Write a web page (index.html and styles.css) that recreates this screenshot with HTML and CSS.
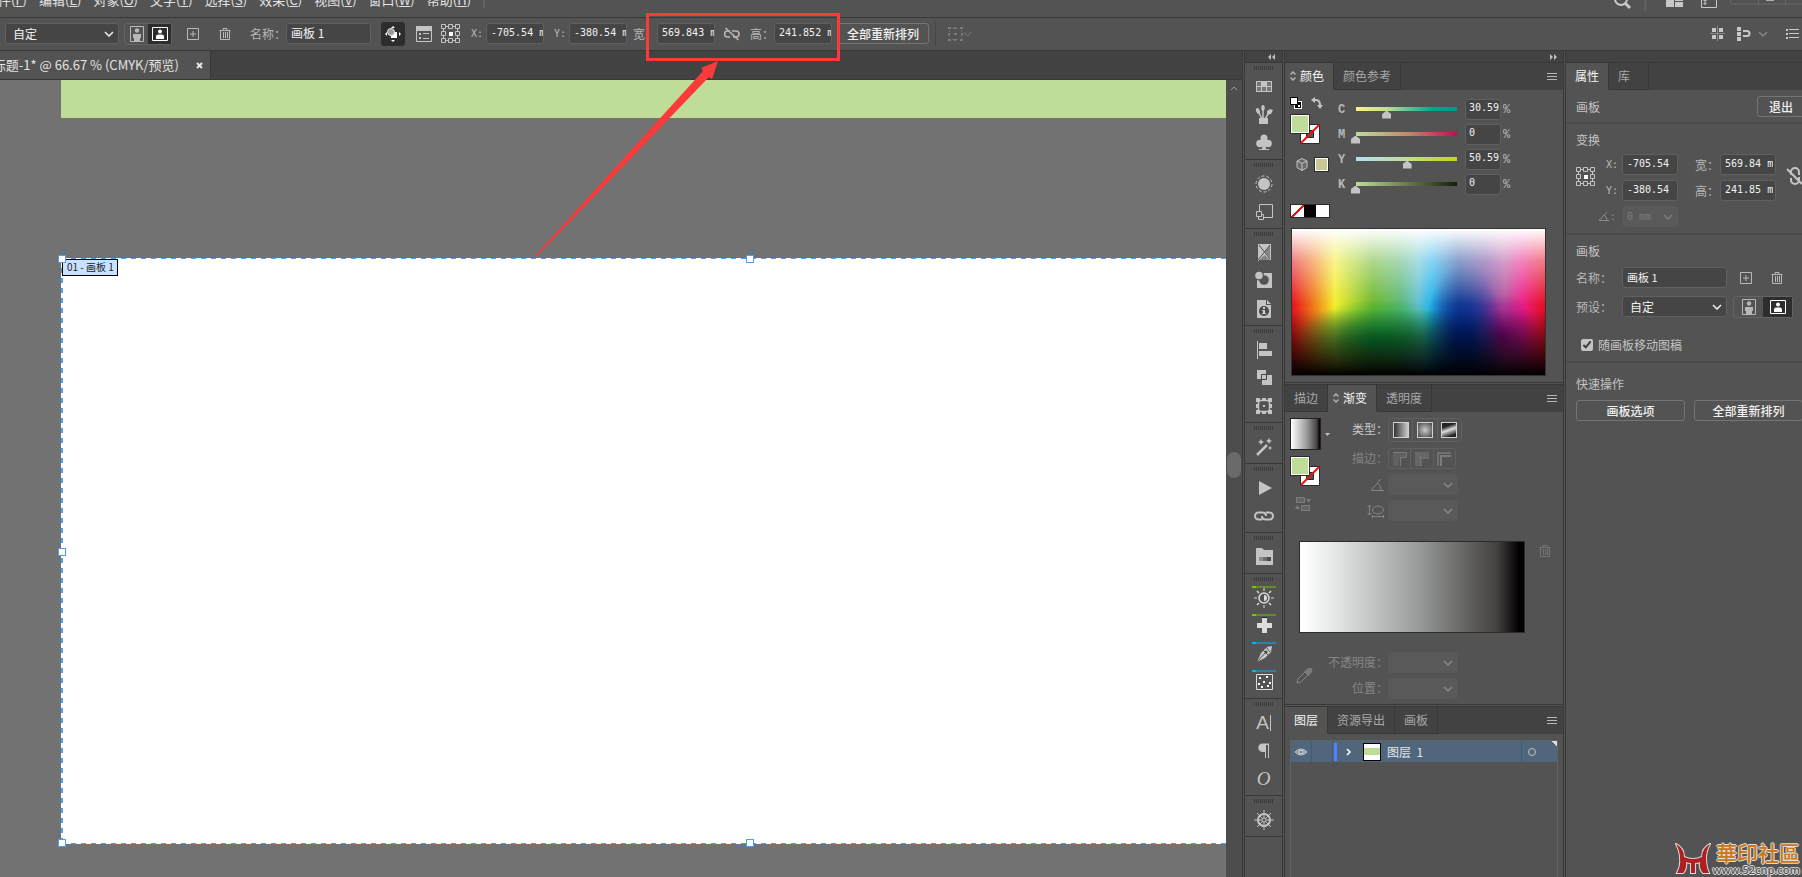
FILE: index.html
```html
<!DOCTYPE html>
<html lang="zh-CN">
<head>
    <meta charset="UTF-8">
    <meta name="viewport" content="width=device-width, initial-scale=1.0">
    <title>标题-1</title>
    <link rel="stylesheet" href="styles.css">
</head>
<body>
    <!-- shared icons -->
    <svg class="sprite" width="0" height="0">
        <symbol id="portrait" viewBox="0 0 14 16">
            <path d="M.5.5h13v15H.5z" fill="none" stroke="currentColor"/>
            <circle cx="7" cy="4.500" r="2.200" fill="currentColor"/>
            <path d="M3 8h8v4h-1v3H4v-3H3z" fill="currentColor"/>
        </symbol>
        <symbol id="landscape" viewBox="0 0 16 14">
            <path d="M.5.5h15v13H.5z" fill="none" stroke="currentColor"/>
            <circle cx="8" cy="4.500" r="2" fill="currentColor"/>
            <path d="M4 12V9l1.500-1.500h5L12 9v3z" fill="currentColor"/>
        </symbol>
        <symbol id="plus" viewBox="0 0 12 12">
            <path d="M.5.5h11v11H.5zM6 3v6M3 6h6" fill="none" stroke="currentColor"/>
        </symbol>
        <symbol id="trash" viewBox="0 0 12 12">
            <path d="M.5 2.500h11M4 2V.5h4V2M1.500 2.500v9h9v-9M4.500 4v6M6.500 4v6M8.500 4v6" fill="none" stroke="currentColor"/>
        </symbol>
        <symbol id="refpoint" viewBox="0 0 20 20">
            <path d="M.5.5h4v4h-4zM7.500.5h4v4h-4zM14.500.5h4v4h-4zM.5 7.500h4v4h-4zM14.500 7.500h4v4h-4zM.5 14.500h4v4h-4zM7.500 14.500h4v4h-4zM14.500 14.500h4v4h-4zM5 2.500h2M12 2.500h2M5 16.500h2M12 16.500h2M2.500 5v2M2.500 12v2M16.500 5v2M16.500 12v2" fill="none" stroke="#c4c4c4"/>
            <path d="M8 8h4v4H8z" fill="#fff"/>
        </symbol>
        <symbol id="unlink" viewBox="0 0 16 14">
            <path d="M6 4H3.500a3 3 0 0 0 0 6H6M8 4h4a3 3 0 0 1 0 6H9M1.500 1l13 12" fill="none" stroke="currentColor" stroke-width="1.600"/>
        </symbol>
        <symbol id="chevron" viewBox="0 0 10 6">
            <path d="M1 1l4 4 4-4" fill="none" stroke="currentColor" stroke-width="1.500"/>
        </symbol>
        <symbol id="menu" viewBox="0 0 10 8">
            <path d="M0 .5h10M0 3.500h10M0 6.500h10" stroke="#b8b8b8"/>
        </symbol>
        <symbol id="updown" viewBox="0 0 6 10">
            <path d="M.5 3.500L3 1l2.500 2.500M.5 6.500L3 9l2.500-2.500" fill="none" stroke="#b0b0b0" stroke-width="1.500"/>
        </symbol>
        <symbol id="fillstroke" viewBox="0 0 30 30">
            <path d="M10.500 10.500h19v19h-19z" fill="#fff" stroke="#2b2b2b"/>
            <path d="M16.500 16.500h7v7h-7z" fill="#535353" stroke="#2b2b2b"/>
            <path d="M11 29L29 11" stroke="#f01010" stroke-width="2"/>
            <path d="M.5.5h19v19H.5z" fill="#fff" stroke="#2b2b2b"/>
            <path d="M2 2h16v16H2z" fill="#bfdc98"/>
        </symbol>
    </svg>

    <nav class="menubar">
        <a href="#">文件(<u>F</u>)</a>
        <a href="#">编辑(<u>E</u>)</a>
        <a href="#">对象(<u>O</u>)</a>
        <a href="#">文字(<u>T</u>)</a>
        <a href="#">选择(<u>S</u>)</a>
        <a href="#">效果(<u>C</u>)</a>
        <a href="#">视图(<u>V</u>)</a>
        <a href="#">窗口(<u>W</u>)</a>
        <a href="#">帮助(<u>H</u>)</a>
        <span class="menu-sep"></span>
        <svg class="menu-tools" width="190" height="16" viewBox="0 0 190 16">
            <circle cx="9" cy="-1" r="6" fill="none" stroke="#c8c8c8" stroke-width="2"/>
            <path d="M13 3l5 5" stroke="#c8c8c8" stroke-width="3"/>
            <path d="M33.500 0v11" stroke="#636363" stroke-width="2"/>
            <path d="M54 0h8v7h-8zM63 0h8v1h-8zM63 2h8v5h-8z" fill="#c8c8c8"/>
            <path d="M89.500-5v12.500h15V-5M92 0h2v1h-2zM92 3h2v1h-2z" fill="none" stroke="#c8c8c8"/>
            <path d="M118.500-5v7q0 2 2 2H190M146.500 0v4M173.500 0v4" fill="none" stroke="#6a6a6a"/>
            <path d="M154 0h8" stroke="#b0b0b0" stroke-width="2"/>
        </svg>
    </nav>

    <form class="controlbar">
        <span class="select preset">
            <select aria-label="画板预设"><option>自定</option></select>
            <svg width="10" height="6"><use href="#chevron"/></svg>
        </span>
        <span class="toggle">
            <button type="button" aria-label="纵向"><svg width="14" height="16"><use href="#portrait"/></svg></button>
            <button type="button" class="on" aria-label="横向"><svg width="16" height="14"><use href="#landscape"/></svg></button>
        </span>
        <button type="button" class="icon-btn new" aria-label="新建画板"><svg width="12" height="12"><use href="#plus"/></svg></button>
        <button type="button" class="icon-btn del" aria-label="删除画板"><svg width="12" height="12"><use href="#trash"/></svg></button>
        <label for="bar-name">名称：</label>
        <input class="name" id="bar-name" type="text" value="画板 1">
        <button type="button" class="move-art on" aria-label="移动图稿">
            <svg width="18" height="18" viewBox="0 0 18 18">
                <path d="M9 1l2 2H7zM9 17l2-2H7zM1 9l2-2v4zM17 9l-2-2v4z" fill="#fff"/>
                <path d="M6 7h7v6H7z" fill="#fff"/>
                <circle cx="7" cy="7" r="3.500" fill="#9a9a9a" stroke="#e0e0e0"/>
            </svg>
        </button>
        <button type="button" class="icon-btn opts" aria-label="画板选项">
            <svg width="16" height="16" viewBox="0 0 16 16">
                <path d="M.5.5h15v15H.5z" fill="none" stroke="#c4c4c4"/>
                <path d="M0 0h16v5H0zM3 7h2v2H3zM3 11h2v2H3zM7 7h6v1H7zM7 12h6v1H7z" fill="#c4c4c4"/>
            </svg>
        </button>
        <svg class="ref" width="20" height="20"><use href="#refpoint"/></svg>
        <label class="mono lx" for="bar-x">X:</label>
        <input class="num" id="bar-x" type="text" value="-705.54 mm">
        <label class="mono ly" for="bar-y">Y:</label>
        <input class="num" id="bar-y" type="text" value="-380.54 mm">
        <label class="wh" for="bar-w">宽：</label>
        <input class="num" id="bar-w" type="text" value="569.843 mm">
        <button type="button" class="icon-btn link" aria-label="约束宽高比例"><svg width="16" height="14"><use href="#unlink"/></svg></button>
        <label class="wh" for="bar-h">高：</label>
        <input class="num" id="bar-h" type="text" value="241.852 mm">
        <button type="button" class="outline rearrange">全部重新排列</button>
        <span class="bar-sep"></span>
        <svg class="snap" width="24" height="16" viewBox="0 0 24 16">
            <path d="M4 2h2v1H4zM8 2h2v1H8zM4 13h2v1H4zM8 13h2v1H8zM1 4h1v2H1zM1 9h1v2H1zM13 4h1v2h-1zM13 9h1v2h-1z" fill="#707070"/>
            <path d="M0 1h3v2H0zM12 1h3v2h-3zM0 13h3v2H0zM12 13h3v2h-3zM6 7h3v2H6zM6 1h2v2H6zM6 13h2v2H6zM0 7h2v2H0zM13 7h2v2h-2z" fill="#7c7c7c"/>
            <path d="M16 6l3.500 4L23 6" fill="none" stroke="#7c7c7c"/>
        </svg>
        <svg class="bar-tools" width="92" height="16" viewBox="0 0 92 16">
            <path d="M0 7h15v1H0zM7 0h1v15H7z" fill="#8a8a8a"/>
            <path d="M2 2h4v4H2zM9 2h4v4H9zM2 9h4v4H2zM9 9h4v4H9z" fill="#c8c8c8"/>
            <path d="M27 1h4v4h-4zM27 6h4v4h-4zM27 11h4v4h-4z" fill="#c8c8c8"/>
            <path d="M33 5h4a2.500 2.500 0 0 1 0 5h-4" fill="none" stroke="#c8c8c8" stroke-width="2"/>
            <path d="M49 6l4 4 4-4" fill="none" stroke="#858585" stroke-width="1.500"/>
            <path d="M76 3h2v2h-2zM76 7h2v2h-2zM76 11h2v2h-2zM79 3h10v1H79zM79 7h10v1H79zM79 11h10v1H79z" fill="#c8c8c8"/>
        </svg>
    </form>

    <div class="workspace">
        <main class="document">
            <div class="doc-tabs">
                <div class="doc-tab">
                    <span>标题-1* @ 66.67 % (CMYK/预览)</span>
                    <button type="button" class="icon-btn" aria-label="关闭"><svg width="7" height="7" viewBox="0 0 7 7"><path d="M1 1l5 5M6 1L1 6" stroke="#e6e6e6" stroke-width="2"/></svg></button>
                </div>
            </div>
            <div class="view">
                <div class="canvas">
                    <div class="artboard previous"></div>
                    <div class="artboard current">
                        <span class="artboard-name">01 - 画板 1</span>
                        <i class="handle tl"></i><i class="handle tc"></i>
                        <i class="handle ml"></i>
                        <i class="handle bl"></i><i class="handle bc"></i>
                    </div>
                </div>
                <div class="scrollbar">
                    <svg width="8" height="5" viewBox="0 0 8 5"><path d="M1 4l3-3 3 3" fill="none" stroke="#9a9a9a"/></svg>
                    <span class="scroll-thumb"></span>
                </div>
            </div>
        </main>

        <aside class="strip">
            <div class="collapse"><svg width="8" height="6" viewBox="0 0 8 6"><path d="M3 0L0 3l3 3zM7 0L4 3l3 3z" fill="#c0c0c0"/></svg></div>
            <div class="strip-group">
                <span class="grip"></span>
                <button type="button" aria-label="色板"><svg width="20" height="20" viewBox="0 0 20 20"><path d="M2 4h16v11H2z" fill="#c4c4c4"/><path d="M3 5h4v4H3zM13 5h4v4h-4zM3 10h4v4H3zM8 10h4v4H8zM13 10h4v4h-4z" fill="#777"/></svg></button>
                <button type="button" aria-label="画笔"><svg width="20" height="20" viewBox="0 0 20 20"><path d="M5 13h9v6H5z" fill="#c4c4c4"/><ellipse cx="4" cy="6" rx="1.800" ry="3" fill="#c4c4c4" transform="rotate(-25 4 6)"/><ellipse cx="9" cy="3" rx="1.700" ry="3" fill="#c4c4c4"/><path d="M13 6l3-2 3 1-2 4-4 1z" fill="#c4c4c4"/><path d="M5 8l3 6M9 5v9M14 9l-3 5" stroke="#c4c4c4" stroke-width="1.500"/></svg></button>
                <button type="button" aria-label="符号"><svg width="20" height="20" viewBox="0 0 20 20"><circle cx="10" cy="5" r="3.500" fill="#c4c4c4"/><circle cx="6" cy="10.500" r="3.800" fill="#c4c4c4"/><circle cx="14" cy="10.500" r="3.800" fill="#c4c4c4"/><path d="M9 7h2l1 9h3v1H5v-1h3z" fill="#c4c4c4"/></svg></button>
            </div>
            <div class="strip-group">
                <span class="grip"></span>
                <button type="button" aria-label="外观"><svg width="20" height="20" viewBox="0 0 20 20"><circle cx="10" cy="10" r="6" fill="#c4c4c4"/><circle cx="10" cy="10" r="8" fill="none" stroke="#c4c4c4" stroke-dasharray="3 2"/></svg></button>
                <button type="button" aria-label="图形样式"><svg width="20" height="20" viewBox="0 0 20 20"><path d="M5.500 9V2.500h13v13H10M2.500 9.500h5v5h-5z" fill="none" stroke="#c4c4c4"/><path d="M4.500 14.500v3h5v-5h-2" fill="none" stroke="#c4c4c4"/></svg></button>
            </div>
            <div class="strip-group">
                <span class="grip"></span>
                <button type="button" aria-label="图案"><svg width="20" height="20" viewBox="0 0 20 20"><path d="M4 1h13v17H4z" fill="#c4c4c4"/><path d="M10.500 8.500L16 2v13z" fill="#858585"/><path d="M5 17l5.500-5 5.500 5z" fill="#858585"/><path d="M4 17l12-15M5 2l11 14M5 17.500h12" fill="none" stroke="#535353"/></svg></button>
                <button type="button" aria-label="路径"><svg width="20" height="20" viewBox="0 0 20 20"><path d="M3 2h15v15H3z" fill="#c4c4c4"/><circle cx="10" cy="9" r="4.800" fill="#535353"/><circle cx="5" cy="4.500" r="5" fill="#535353"/><circle cx="5" cy="4.500" r="3.800" fill="#c4c4c4"/></svg></button>
                <button type="button" aria-label="文档信息"><svg width="20" height="20" viewBox="0 0 20 20"><path d="M3 1h9v5h5v13H3zM13 1l4 4h-4z" fill="#c4c4c4"/><circle cx="10" cy="12" r="5" fill="#4b4b4b"/><path d="M9 8h2v2H9zM8 11h3v3h1v1H8v-1h1v-2H8z" fill="#d0d0d0"/></svg></button>
            </div>
            <div class="strip-group">
                <span class="grip"></span>
                <button type="button" aria-label="对齐"><svg width="20" height="20" viewBox="0 0 20 20"><path d="M3 1h1v18H3zM5 3h8v6H5zM5 11h13v5H5z" fill="#c4c4c4"/></svg></button>
                <button type="button" aria-label="路径查找器"><svg width="20" height="20" viewBox="0 0 20 20"><path d="M3 2h9v9H3zM8 7h10v10H8z" fill="#c4c4c4"/><path d="M7.500 6.500h5v5h-5z" fill="#c4c4c4" stroke="#454545"/></svg></button>
                <button type="button" aria-label="变换"><svg width="20" height="20" viewBox="0 0 20 20"><path d="M4.500 4.500h11v11h-11z" fill="none" stroke="#c4c4c4" stroke-width="1.500"/><path d="M2 2h4v4H2zM8 2h4v3H8zM14 2h4v4h-4zM2 14h4v4H2zM14 14h4v4h-4zM8 15h4v3H8zM9 9h2v2H9zM2 8h2v4H2zM16 8h2v4h-2z" fill="#c4c4c4"/></svg></button>
            </div>
            <div class="strip-group">
                <span class="grip"></span>
                <button type="button" aria-label="魔棒"><svg width="20" height="20" viewBox="0 0 20 20"><path d="M3 18L13 8" stroke="#c4c4c4" stroke-width="2.500"/><path d="M7 2l1 2 2 1-2 1-1 2-1-2-2-1 2-1zM15 1l1 2 2 1-2 1-1 2-1-2-2-1 2-1zM16 9l.7 1.300L18 11l-1.300.7L16 13l-.7-1.300L14 11l1.300-.7z" fill="#c4c4c4"/></svg></button>
            </div>
            <div class="strip-group">
                <span class="grip"></span>
                <button type="button" aria-label="动作"><svg width="20" height="20" viewBox="0 0 20 20"><path d="M5 3l13 7-13 7z" fill="#c4c4c4"/></svg></button>
                <button type="button" aria-label="链接"><svg width="20" height="20" viewBox="0 0 20 20"><path d="M8 13.500H4.500a3.500 3.500 0 0 1 0-7h4Q12 6.500 12 10M12 6.500h3.500a3.500 3.500 0 0 1 0 7h-4Q8 13.500 8 10" fill="none" stroke="#c4c4c4" stroke-width="2"/></svg></button>
            </div>
            <div class="strip-group">
                <span class="grip"></span>
                <button type="button" aria-label="库"><svg width="20" height="20" viewBox="0 0 20 20"><path d="M2 1h6l2 2h9v15H2z" fill="#c4c4c4"/><path d="M5 10h4v4H5z" fill="#8c8c8c"/><path d="M9 10h4v4H9z" fill="#6d6d6d"/><path d="M13 10h4v4h-4z" fill="#4b4b4b"/></svg></button>
            </div>
            <div class="strip-group plugins">
                <span class="grip"></span>
                <button type="button" class="green" aria-label="亮度"><svg width="20" height="20" viewBox="0 0 20 20"><circle cx="10" cy="10" r="5" fill="none" stroke="#dcdcdc" stroke-width="1.500"/><path d="M10 7a3 3 0 0 1 0 6zM9.500 0h1v3h-1zM9.500 17h1v3h-1zM0 9.500h3v1H0zM17 9.500h3v1h-3z" fill="#dcdcdc"/><path d="M3 3l2 2M17 3l-2 2M3 17l2-2M17 17l-2-2" stroke="#dcdcdc" stroke-width="1.500"/></svg></button>
                <button type="button" class="green" aria-label="添加"><svg width="20" height="20" viewBox="0 0 20 20"><path d="M8 2h5v5h5v5h-5v5H8v-5H3V7h5z" fill="#dcdcdc"/><path d="M8 1h5v1H8z" fill="#222"/></svg></button>
                <button type="button" class="blue" aria-label="钢笔"><svg width="20" height="20" viewBox="0 0 20 20"><path d="M3 18l4-9 6-6 5-1-1 6-6 6z" fill="#c8c8c8"/><path d="M3 18l8-9M12 3l4 5M9 6l5 5" stroke="#555"/><circle cx="12" cy="8" r="1.500" fill="#444"/></svg></button>
                <button type="button" class="blue" aria-label="随机"><svg width="20" height="20" viewBox="0 0 20 20"><path d="M2.500 2.500h16v15h-16z" fill="none" stroke="#dcdcdc"/><path d="M5 5h2v2H5zM12 4h2v2h-2zM9 9h2v2H9zM4 11h2v2H4zM15 10h2v2h-2zM7 14h2v2H7zM13 13h2v2h-2z" fill="#fff"/></svg></button>
            </div>
            <div class="strip-group">
                <span class="grip"></span>
                <button type="button" class="glyph char" aria-label="字符"><span>A</span></button>
                <button type="button" class="glyph" aria-label="段落"><svg width="20" height="20" viewBox="0 0 20 20"><path d="M8 2.500h7V17h-1V4h-2v13h-1v-6H9a4.200 4.200 0 0 1-1-8.500z" fill="#c4c4c4"/></svg></button>
                <button type="button" class="glyph opentype" aria-label="OpenType"><span>O</span></button>
            </div>
            <div class="strip-group">
                <span class="grip"></span>
                <button type="button" aria-label="导航"><svg width="20" height="20" viewBox="0 0 20 20"><circle cx="10" cy="10" r="6" fill="none" stroke="#c4c4c4" stroke-width="2"/><circle cx="10" cy="10" r="2" fill="none" stroke="#c4c4c4"/><path d="M10 0v8M10 12v8M0 10h8M12 10h8M3 3l5.500 5.500M17 3l-5.500 5.500M3 17l5.500-5.500M17 17l-5.500-5.500" stroke="#c4c4c4"/></svg></button>
            </div>
        </aside>

        <aside class="panels">
            <div class="collapse"><svg width="8" height="6" viewBox="0 0 8 6"><path d="M1 0l3 3-3 3zM5 0l3 3-3 3z" fill="#c0c0c0"/></svg></div>

            <section class="panel color-panel">
                <div class="tabs">
                    <button type="button" class="tab active with-arrow"><svg width="6" height="10"><use href="#updown"/></svg>颜色</button>
                    <button type="button" class="tab">颜色参考</button>
                    <svg class="panel-menu" width="10" height="8"><use href="#menu"/></svg>
                </div>
                <div class="color-body">
                    <div class="color-tools">
                        <div class="tool-row">
                            <svg width="12" height="12" viewBox="0 0 12 12"><path d="M4 4h8v8H4z" fill="#fff"/><path d="M5 5h6v6H5z" fill="#000"/><path d="M8 8h2v2H8z" fill="#fff"/><path d="M.5.5h7v7h-7z" fill="#fff" stroke="#000"/></svg>
                            <svg width="12" height="12" viewBox="0 0 12 12"><path d="M3 3h2q4 0 4 5" fill="none" stroke="#c4c4c4" stroke-width="2"/><path d="M0 3l4-3v6zM6 8h6l-3 4z" fill="#c4c4c4"/></svg>
                        </div>
                        <svg width="30" height="30"><use href="#fillstroke"/></svg>
                        <div class="tool-row gamut">
                            <svg width="12" height="13" viewBox="0 0 12 13"><path d="M6 .5l5 2.500v6.500l-5 3-5-3V3z" fill="#6a6a6a"/><path d="M6 .5l5 2.500v6.500l-5 3-5-3V3zM1 3l5 2.500L11 3M6 5.500v7" fill="none" stroke="#c4c4c4"/></svg>
                            <span class="gamut-swatch"></span>
                        </div>
                    </div>
                    <div class="sliders">
                        <div class="slider-row">
                            <label for="c">C</label>
                            <input class="range c" type="range" min="0" max="100" step="any" value="30.59" aria-label="C">
                            <input class="num" id="c" type="text" value="30.59"><span>%</span>
                        </div>
                        <div class="slider-row">
                            <label for="m">M</label>
                            <input class="range m" type="range" min="0" max="100" value="0" aria-label="M">
                            <input class="num" id="m" type="text" value="0"><span>%</span>
                        </div>
                        <div class="slider-row">
                            <label for="y">Y</label>
                            <input class="range y" type="range" min="0" max="100" step="any" value="50.59" aria-label="Y">
                            <input class="num" id="y" type="text" value="50.59"><span>%</span>
                        </div>
                        <div class="slider-row">
                            <label for="k">K</label>
                            <input class="range k" type="range" min="0" max="100" value="0" aria-label="K">
                            <input class="num" id="k" type="text" value="0"><span>%</span>
                        </div>
                    </div>
                </div>
                <div class="basic-swatches">
                    <span class="none"></span><span class="black"></span><span class="white"></span>
                </div>
                <div class="spectrum"></div>
            </section>

            <section class="panel gradient-panel">
                <div class="tabs">
                    <button type="button" class="tab">描边</button>
                    <button type="button" class="tab active with-arrow"><svg width="6" height="10"><use href="#updown"/></svg>渐变</button>
                    <button type="button" class="tab">透明度</button>
                    <svg class="panel-menu" width="10" height="8"><use href="#menu"/></svg>
                </div>
                <div class="gradient-body">
                    <div class="gradient-tools">
                        <div class="tool-row">
                            <span class="gradient-thumb"></span>
                            <svg width="5" height="3" viewBox="0 0 5 3"><path d="M0 0h5L2.500 3z" fill="#c4c4c4"/></svg>
                        </div>
                        <svg width="30" height="30"><use href="#fillstroke"/></svg>
                        <svg class="reverse" width="16" height="14" viewBox="0 0 16 14"><path d="M1.500.5h8v5h-8zM6.500 8.500h8v5h-8z" fill="#666" stroke="#7c7c7c"/><path d="M11 2h5l-2.500 4zM0 12h5L2.500 8z" fill="#7c7c7c"/></svg>
                    </div>
                    <div class="gradient-fields">
                        <div class="field-row type-row">
                            <span class="field-label bright">类型：</span>
                            <span class="segment types">
                                <button type="button" aria-label="线性"><i class="linear"></i></button>
                                <button type="button" aria-label="径向"><i class="radial"></i></button>
                                <button type="button" aria-label="任意形状"><i class="freeform"></i></button>
                            </span>
                        </div>
                        <div class="field-row">
                            <span class="field-label">描边：</span>
                            <span class="segment strokes">
                                <button type="button" aria-label="描边中应用渐变" disabled><svg width="14" height="14" viewBox="0 0 14 14"><path d="M0 0h14v6H6v8H0z" fill="#606060"/><path d="M0 .5h13.500v5h-6V14" fill="none" stroke="#7a7a7a"/></svg></button>
                                <button type="button" aria-label="沿描边应用渐变" disabled><svg width="14" height="14" viewBox="0 0 14 14"><path d="M0 0h14v6H6v8H0z" fill="#666"/><path d="M0 0l6 6h8M6 6v8" fill="none" stroke="#7a7a7a"/></svg></button>
                                <button type="button" aria-label="跨描边应用渐变" disabled><svg width="14" height="14" viewBox="0 0 14 14"><path d="M1 14V1h13" fill="none" stroke="#707070" stroke-width="2"/><path d="M4 14V4h10" fill="none" stroke="#7a7a7a" stroke-width="2"/></svg></button>
                            </span>
                        </div>
                        <div class="field-row">
                            <svg class="field-icon" width="14" height="12" viewBox="0 0 14 12"><path d="M11 0L1 11.500h13M7 4q4 2 4 7" fill="none" stroke="#858585"/></svg>
                            <span class="select dim"><select aria-label="角度" disabled><option></option></select><svg width="10" height="6"><use href="#chevron"/></svg></span>
                        </div>
                        <div class="field-row">
                            <svg class="field-icon" width="17" height="14" viewBox="0 0 17 14"><ellipse cx="11" cy="6" rx="5.500" ry="4" fill="none" stroke="#858585"/><path d="M2.500 1v10M.5 3l2-2 2 2M.5 9l2 2 2-2M5 12.500h12M5.500 11v3M16.500 11v3" fill="none" stroke="#858585"/></svg>
                            <span class="select dim"><select aria-label="长宽比" disabled><option></option></select><svg width="10" height="6"><use href="#chevron"/></svg></span>
                        </div>
                    </div>
                </div>
                <div class="ramp-row">
                    <span class="ramp"></span>
                    <svg class="faint" width="12" height="12"><use href="#trash"/></svg>
                </div>
                <div class="gradient-stop">
                    <svg width="18" height="18" viewBox="0 0 18 18"><path d="M2 16l1-4 7-7 3 3-7 7z" fill="none" stroke="#858585"/><path d="M9 4l5 5 1-2 2-2q1-3-1-4t-4 1l-1 1z" fill="#7c7c7c"/></svg>
                    <div class="gradient-fields">
                        <div class="field-row">
                            <label class="field-label" for="opacity">不透明度：</label>
                            <span class="select dim"><select id="opacity" disabled><option></option></select><svg width="10" height="6"><use href="#chevron"/></svg></span>
                        </div>
                        <div class="field-row">
                            <label class="field-label" for="location">位置：</label>
                            <span class="select dim"><select id="location" disabled><option></option></select><svg width="10" height="6"><use href="#chevron"/></svg></span>
                        </div>
                    </div>
                </div>
            </section>

            <section class="panel layers-panel">
                <div class="tabs">
                    <button type="button" class="tab active">图层</button>
                    <button type="button" class="tab">资源导出</button>
                    <button type="button" class="tab">画板</button>
                    <svg class="panel-menu" width="10" height="8"><use href="#menu"/></svg>
                </div>
                <div class="layer-list">
                    <div class="layer">
                        <span class="cell eye"><svg width="14" height="8" viewBox="0 0 14 8"><path d="M1 4q6-6 12 0-6 6-12 0z" fill="#8f9dab" stroke="#c4c4c4"/><circle cx="7" cy="4" r="2.500" fill="#c4c4c4"/><circle cx="7" cy="4" r="1" fill="#50667d"/></svg></span>
                        <span class="cell lock"></span>
                        <span class="layer-color"></span>
                        <svg class="expand" width="6" height="8" viewBox="0 0 6 8"><path d="M1 1l3 3-3 3" fill="none" stroke="#fff" stroke-width="1.500"/></svg>
                        <span class="layer-thumb"></span>
                        <span class="layer-name">图层&nbsp; 1</span>
                        <span class="target"><i></i></span>
                    </div>
                </div>
            </section>
        </aside>

        <aside class="properties">
            <div class="collapse"></div>
            <div class="tabs">
                <button type="button" class="tab active">属性</button>
                <button type="button" class="tab library">库</button>
            </div>
            <section class="prop prop-head">
                <h2>画板</h2>
                <button type="button" class="outline">退出</button>
            </section>
            <section class="prop">
                <h2>变换</h2>
                <div class="transform">
                    <svg width="20" height="20"><use href="#refpoint"/></svg>
                    <div class="xy">
                        <label class="mono" for="p-x">X:</label><input class="num" id="p-x" type="text" value="-705.54">
                        <label for="p-w">宽：</label><input class="num" id="p-w" type="text" value="569.84 mm">
                        <label class="mono" for="p-y">Y:</label><input class="num" id="p-y" type="text" value="-380.54">
                        <label for="p-h">高：</label><input class="num" id="p-h" type="text" value="241.85 mm">
                        <label class="mono angle" for="p-a"><svg width="12" height="9" viewBox="0 0 12 9"><path d="M9 0L1 8.500h10M6 3q3 2 3 5" fill="none" stroke="#8a8a8a"/></svg>:</label>
                        <span class="select dim"><select id="p-a" disabled><option>0 mm</option></select><svg width="10" height="6"><use href="#chevron"/></svg></span>
                    </div>
                    <svg class="link" width="18" height="18" viewBox="0 0 18 18"><path d="M5 8V5a4 4 0 0 1 8 0v3M5 11v2a4 4 0 0 0 8 0v-3M1 2l15 15" fill="none" stroke="#c4c4c4" stroke-width="2"/></svg>
                </div>
            </section>
            <section class="prop artboard-section">
                <h2>画板</h2>
                <div class="prop-row">
                    <label for="p-name">名称：</label>
                    <input class="name" id="p-name" type="text" value="画板 1">
                    <button type="button" class="icon-btn" aria-label="新建画板"><svg width="12" height="12"><use href="#plus"/></svg></button>
                    <button type="button" class="icon-btn" aria-label="删除画板"><svg width="12" height="12"><use href="#trash"/></svg></button>
                </div>
                <div class="prop-row">
                    <label for="p-preset">预设：</label>
                    <span class="select"><select id="p-preset"><option>自定</option></select><svg width="10" height="6"><use href="#chevron"/></svg></span>
                    <span class="toggle">
                        <button type="button" aria-label="纵向"><svg width="14" height="16"><use href="#portrait"/></svg></button>
                        <button type="button" class="on" aria-label="横向"><svg width="16" height="14"><use href="#landscape"/></svg></button>
                    </span>
                </div>
                <label class="check"><input type="checkbox" checked>随画板移动图稿</label>
            </section>
            <section class="prop quick">
                <h2>快速操作</h2>
                <div class="quick-row">
                    <button type="button" class="outline">画板选项</button>
                    <button type="button" class="outline">全部重新排列</button>
                </div>
            </section>
        </aside>
    </div>

    <!-- red callout over the width / height fields -->
    <svg class="callout" width="320" height="250" viewBox="0 0 320 250">
        <path d="M117.500 4.500h191v45h-191z" fill="none" stroke="#fc3a3a" stroke-width="3"/>
        <path d="M5 246L173 61l-2-3 17-7-6 18-3-2L6 247z" fill="#fc3a3a"/>
    </svg>

    <div class="watermark">
        <svg width="36" height="32" viewBox="0 0 36 32">
            <g fill="#b01e22" stroke="#d8d8d8" stroke-width="2" paint-order="stroke">
                <path d="M1 1Q9 5 9 14q9 4 18 0Q27 5 35 1q-4 7-4 14 0 9 3 15h-6q-4-4-3-11-2 1-5 1v10h-4V20q-3 0-5-1 1 7-3 11H2q4-7 3-15Q5 8 1 1z"/>
            </g>
        </svg>
        <div class="watermark-text">
            <strong>華印社區</strong>
            <span>www.52cnp.com</span>
        </div>
    </div>
</body>
</html>
```

FILE: styles.css
```css
* {
    box-sizing: border-box;
}

html, body {
    height: 100%;
}

body {
    margin: 0;
    display: flex;
    flex-direction: column;
    overflow: hidden;
    position: relative;
    background: #535353;
    color: #d6d6d6;
    font-family: "Noto Sans CJK SC", sans-serif;
    font-size: 12px;
    line-height: 16px;
}

button, input, select {
    font: inherit;
    color: inherit;
    margin: 0;
    padding: 0;
    border: 0;
    background: none;
}

svg {
    display: block;
    flex: none;
}

.sprite {
    position: absolute;
}

/* menu */
.menubar {
    display: flex;
    align-items: flex-end;
    gap: 12px;
    height: 17px;
    flex: none;
    margin-left: -15px;
    padding-bottom: 9px;
    overflow: hidden;
    font-size: 13px;
}

.menubar a {
    color: #e2e2e2;
    text-decoration: none;
    white-space: nowrap;
}

.menu-sep {
    width: 2px;
    height: 12px;
    background: #636363;
}

.menu-tools {
    margin-left: auto;
    margin-bottom: -8px;
}

/* control bar */
.controlbar {
    display: flex;
    align-items: center;
    flex: none;
    height: 34px;
    padding: 0 0 1px 5px;
    border-top: 1px solid #383838;
    border-bottom: 1px solid #383838;
    white-space: nowrap;
}

.controlbar > * {
    flex: none;
}

label {
    color: #b8b8b8;
}

input[type="text"], .select {
    height: 21px;
    border: 1px solid #606060;
    border-radius: 3px;
    background: #454545;
    color: #f2f2f2;
}

input[type="text"] {
    padding: 0 0 2px 4px;
}

.num, .mono {
    font-family: "DejaVu Sans Mono", monospace;
    font-size: 10px;
}

.controlbar .num {
    width: 58px;
}

.select {
    display: inline-grid;
    align-items: center;
}

.select select {
    grid-area: 1 / 1;
    appearance: none;
    width: 100%;
    padding-left: 7px;
    opacity: 1;
    outline: 0;
}

.select svg {
    grid-area: 1 / 1;
    justify-self: end;
    margin-right: 4px;
    pointer-events: none;
}

.select.dim {
    border-color: #595959;
    background: #595959;
    color: #7c7c7c;
}

.preset {
    width: 114px;
}

.toggle {
    display: flex;
    height: 22px;
    border: 1px solid #646464;
    border-radius: 3px;
    color: #b8b8b8;
}

.toggle button {
    display: grid;
    place-items: center;
    width: 23px;
}

.on {
    background: #2d2d2d;
    color: #fff;
}

.controlbar .toggle {
    margin-left: 5px;
}

.icon-btn {
    color: #b8b8b8;
}

.new {
    margin-left: 15px;
}

.del {
    margin: 0 19px 0 20px;
}

.controlbar .name {
    width: 85px;
}

.move-art {
    display: grid;
    place-items: center;
    width: 24px;
    height: 24px;
    margin-left: 10px;
    border-radius: 3px;
}

.opts {
    margin: 0 9px 0 11px;
}

.lx {
    width: 15px;
    margin-left: 10px;
}

.ly {
    width: 15px;
    margin-left: 10px;
}

.wh {
    width: 24px;
    margin-left: 6px;
}

.controlbar .link {
    margin: 0 4px 0 9px;
}

.outline {
    height: 21px;
    border: 1px solid #757575;
    border-radius: 3px;
    color: #f0f0f0;
    font-weight: 500;
}

.rearrange {
    width: 92px;
    margin-left: 5px;
}

.bar-sep {
    width: 1px;
    height: 24px;
    margin: 0 12px 0 6px;
    background: #474747;
}

.bar-tools {
    margin-left: auto;
}

/* document */
.workspace {
    display: flex;
    flex: 1;
    min-height: 0;
}

.document {
    display: flex;
    flex-direction: column;
    flex: 1;
    min-width: 0;
}

.doc-tabs {
    height: 29px;
    background: #424242;
    border-bottom: 1px solid #383838;
}

.doc-tab {
    display: flex;
    align-items: center;
    justify-content: flex-end;
    gap: 17px;
    width: 211px;
    height: 28px;
    padding-right: 7px;
    overflow: hidden;
    border-right: 1px solid #383838;
    background: #535353;
    color: #e2e2e2;
    font-size: 13px;
    white-space: nowrap;
}

.view {
    display: flex;
    flex: 1;
    min-height: 0;
}

.canvas {
    flex: 1;
    position: relative;
    overflow: hidden;
    background: #727272;
}

.artboard {
    position: absolute;
    left: 61px;
    width: 1376px;
}

.previous {
    top: 0;
    height: 38px;
    background: #bfdc98;
}

.current {
    top: 178px;
    height: 586px;
    background:
        repeating-linear-gradient(90deg, #4a9ff0 0 5px, #fff 5px 10px) 0 0 / 100% 1px no-repeat,
        repeating-linear-gradient(90deg, #4a9ff0 0 5px, #fff 5px 10px) 0 100% / 100% 1px no-repeat,
        repeating-linear-gradient(#4a9ff0 0 5px, #fff 5px 10px) 0 0 / 2px 100% no-repeat,
        #fff;
}

.artboard-name {
    position: absolute;
    left: 1px;
    top: 1px;
    height: 17px;
    padding: 0 3px 0 4px;
    border: 1px solid #000;
    background: #c8e2ff;
    color: #222;
    font-size: 10px;
    line-height: 13px;
    white-space: nowrap;
}

.handle {
    position: absolute;
    width: 8px;
    height: 8px;
    margin: -3px;
    border: 1px solid #4a9ff0;
    background: #fff;
}

.tl { left: 0; top: 0; }
.tc { left: 50%; top: 0; }
.ml { left: 0; top: 50%; }
.bl { left: 0; bottom: 0; }
.bc { left: 50%; bottom: 0; }

.scrollbar {
    display: flex;
    flex-direction: column;
    align-items: center;
    width: 16px;
    padding-top: 6px;
    background: #4d4d4d;
}

.scroll-thumb {
    width: 14px;
    height: 26px;
    margin-top: 361px;
    border-radius: 7px;
    background: #6a6a6a;
}

/* docked icons */
.strip, .panels, .properties {
    flex: none;
    border-left: 3px double #383838;
}

.collapse {
    display: flex;
    align-items: center;
    justify-content: flex-end;
    height: 12px;
    padding-right: 6px;
    border-bottom: 1px solid #383838;
    background: #424242;
}

.strip {
    width: 40px;
}

.strip-group {
    display: flex;
    flex-direction: column;
    align-items: center;
    padding: 3px 0 2px;
    border-bottom: 1px solid #383838;
}

.grip {
    width: 20px;
    height: 4px;
    margin-bottom: 3px;
    background: repeating-linear-gradient(90deg, #3a3a3a 0 1px, transparent 1px 2px);
}

.strip button {
    display: grid;
    place-items: center;
    width: 24px;
    height: 28px;
}

.plugins .green, .plugins .blue {
    background: linear-gradient(90deg, #78c800 0 4px, #648c2c 4px) 0 2px / 100% 2px no-repeat;
}

.plugins .blue {
    background-image: linear-gradient(90deg, #00b4ff 0 4px, #2d82a8 4px);
}

.glyph {
    color: #c4c4c4;
    font-family: "Liberation Sans", sans-serif;
    font-size: 19px;
}

.char span {
    padding-right: 1px;
    border-right: 1px solid #c4c4c4;
}

.opentype {
    font-family: "Liberation Serif", serif;
    font-style: italic;
}

/* panels */
.panels {
    display: flex;
    flex-direction: column;
    width: 281px;
}

.panel {
    height: 322px;
    flex: none;
    border-bottom: 3px double #383838;
}

.tabs {
    display: flex;
    height: 27px;
    background: #424242;
}

.tab {
    padding: 0 9px 1px;
    border-right: 1px solid #383838;
    border-bottom: 1px solid #383838;
    color: #a8a8a8;
    white-space: nowrap;
}

.tab.active {
    background: #535353;
    border-bottom-color: #535353;
    color: #f5f5f5;
}

.with-arrow {
    display: flex;
    align-items: center;
    gap: 4px;
    padding-left: 5px;
}

.panel-menu {
    margin: 10px 6px 0 auto;
}

.color-body {
    display: flex;
    height: 113px;
    padding: 7px 5px 0;
}

.color-tools {
    width: 48px;
}

.tool-row {
    display: flex;
    align-items: center;
    gap: 9px;
}

.color-tools > svg {
    margin: 5px 0 13px;
}

.gamut {
    gap: 6px;
    padding-left: 6px;
}

.gamut-swatch {
    width: 15px;
    height: 15px;
    border: 1px solid #2b2b2b;
    outline: 1px solid #fff;
    outline-offset: -2px;
    background: #c8c896;
}

.slider-row {
    display: flex;
    align-items: center;
    height: 25px;
}

.slider-row label {
    width: 13px;
    font-family: "Liberation Mono", monospace;
    font-weight: bold;
}

.slider-row .num {
    width: 36px;
    margin: 0 2px 0 3px;
    padding: 0 0 4px 3px;
}

.slider-row span {
    color: #b8b8b8;
    font-family: "Liberation Mono", monospace;
}

.range {
    appearance: none;
    width: 111px;
    height: 18px;
    background: no-repeat 5px 6px / 101px 4px;
}

.range::-webkit-slider-thumb {
    appearance: none;
    width: 9px;
    height: 8px;
    margin-top: 10px;
    background: #c4c4c4;
    clip-path: polygon(50% 0, 100% 45%, 100% 100%, 0 100%, 0 45%);
}

.c { background-image: linear-gradient(90deg, #fff08c, #bfdc98 31%, #00a890 75%, #009a8c); }
.m { background-image: linear-gradient(90deg, #bfdc98, #c08c6c 50%, #c01050); }
.y { background-image: linear-gradient(90deg, #b4e0f8, #bfdc98 50%, #c4d800); }
.k { background-image: linear-gradient(90deg, #bfdc98, #141e08); }

.basic-swatches {
    display: flex;
    width: 40px;
    height: 14px;
    margin: 1px 0 10px 5px;
    border: 1px solid #2b2b2b;
}

.basic-swatches span {
    flex: 1;
    background: #fff;
}

.basic-swatches .none {
    background: linear-gradient(135deg, #fff 44%, #f01010 44% 56%, #fff 56%);
}

.basic-swatches .black {
    background: #060202;
}

.spectrum {
    height: 148px;
    margin: 0 17px 0 6px;
    border: 1px solid #333;
    background:
        linear-gradient(transparent 55%, rgba(0, 0, 0, .5) 76%, #000),
        linear-gradient(#fff, rgba(255, 255, 255, .45) 22%, rgba(255, 255, 255, 0) 52%),
        radial-gradient(ellipse 16% 55% at 68% 78%, #00288c 20%, rgba(0, 40, 140, 0)),
        radial-gradient(ellipse 34% 28% at 36% 76%, #10a040 10%, rgba(16, 160, 64, 0)),
        radial-gradient(ellipse 14% 30% at 83% 74%, #90007c, rgba(144, 0, 124, 0)),
        linear-gradient(90deg, #e6101c, #f08018 9%, #f3ee2a 17%, #6cb82c 32%, #5cb878 43%, #60c0d0 50%, #22b4ee 55%, #2850a0 66%, #6c48a0 76%, #b4509c 84%, #ec1c88 91%, #e60e1c);
}

/* gradient panel */
.gradient-body {
    display: flex;
    height: 109px;
    padding: 6px 5px 0;
}

.gradient-tools {
    width: 40px;
}

.gradient-tools .tool-row {
    gap: 4px;
}

.gradient-tools > svg {
    margin-top: 6px;
}

.gradient-tools .reverse {
    margin: 11px 0 0 5px;
}

.gradient-thumb {
    width: 32px;
    height: 32px;
    border: 1px solid #222;
    background: linear-gradient(90deg, #fff, #999 55%, #4a4644 88%, #000);
}

.gradient-fields {
    display: flex;
    flex-direction: column;
    gap: 5px;
}

.gradient-body .gradient-fields {
    width: 132px;
}

.field-row {
    display: flex;
    align-items: center;
    justify-content: flex-end;
    height: 21px;
    padding-right: 4px;
}

.type-row {
    height: 24px;
    padding-right: 0;
    margin-bottom: 1px;
}

.field-label {
    padding-bottom: 2px;
    color: #858585;
}

.bright {
    color: #c8c8c8;
}

.field-icon {
    margin-right: 4px;
}

.field-row .select {
    width: 70px;
    color: #858585;
}

.segment {
    display: flex;
    height: 21px;
    border: 1px solid #606060;
    border-radius: 3px;
}

.types {
    width: 74px;
    height: 24px;
}

.strokes {
    width: 68px;
    margin-right: 2px;
}

.segment button {
    display: grid;
    place-items: center;
    flex: 1;
}

.segment button + button {
    border-left: 1px solid #606060;
}

.segment i {
    width: 16px;
    height: 16px;
    border: 1px solid #d0d0d0;
}

.linear { background: linear-gradient(90deg, #333, #ccc); }
.radial { background: radial-gradient(#ccc, #444); }
.freeform { background: linear-gradient(160deg, #222 25%, #ddd 50%, #222 85%); }

.ramp-row {
    display: flex;
    justify-content: space-between;
    margin: 20px 12px 19px 14px;
}

.ramp {
    width: 226px;
    height: 92px;
    border: 1px solid #2b2b2b;
    background: linear-gradient(90deg, #fff 2%, #e6eae8 14%, #979b99 53%, #44403e 88%, #000 98%);
}

.faint {
    margin-top: 4px;
    color: #757575;
}

.gradient-stop {
    display: flex;
    align-items: center;
    padding-left: 10px;
}

.gradient-stop .gradient-fields {
    width: 149px;
}

/* layers */
.layers-panel {
    flex: 1;
    min-height: 0;
    border-bottom: 0;
    display: flex;
    flex-direction: column;
}

.layers-panel .tabs {
    flex: none;
}

.layer-list {
    flex: 1;
    margin: 6px 5px 0;
    border: 1px solid #626262;
    border-bottom: 0;
}

.layer {
    display: flex;
    align-items: center;
    height: 21px;
    background: linear-gradient(225deg, #ddd 4px, transparent 4px), #50667d;
}

.cell {
    height: 100%;
    width: 21px;
    border-right: 1px solid #485a6e;
}

.eye {
    display: grid;
    place-items: center;
}

.layer-color {
    width: 3px;
    height: 18px;
    margin: 0 9px 0 1px;
    background: #4f80ff;
}

.layer-thumb {
    width: 18px;
    height: 18px;
    margin: 0 6px 0 11px;
    border: 1px solid #000;
    background: linear-gradient(#fff 28%, #bfdc98 28% 70%, #fff 70%);
}

.layer-name {
    flex: 1;
    color: #e6e6e6;
}

.target {
    display: flex;
    align-items: center;
    height: 100%;
    width: 36px;
    padding-left: 6px;
    border-left: 1px solid #485a6e;
}

.target i {
    width: 8px;
    height: 8px;
    border: 1px solid #c4c4c4;
    border-radius: 50%;
}

/* properties */
.properties {
    width: 239px;
    overflow: hidden;
}

.library {
    padding-right: 18px;
}

.prop {
    width: 248px;
    padding: 8px 10px 6px;
    border-bottom: 2px solid #4a4a4a;
}

.prop h2 {
    margin: 0;
    color: #c4c4c4;
    font-size: 12px;
    font-weight: 400;
}

.prop-head {
    display: flex;
    justify-content: space-between;
    align-items: center;
    padding: 6px 9px 5px 10px;
}

.prop-head .outline {
    width: 48px;
}

.transform {
    display: flex;
    gap: 10px;
    margin-top: 6px;
}

.transform > svg {
    margin-top: 13px;
}

.xy {
    display: grid;
    grid-template-columns: 16px 56px 42px 56px;
    row-gap: 5px;
    align-items: center;
    justify-items: start;
}

.xy .num {
    width: 56px;
    padding: 0 2px 3px 4px;
}

.xy label:not(.mono) {
    justify-self: end;
    width: 25px;
}

.xy .angle {
    display: flex;
    align-items: center;
    justify-self: end;
    padding-right: 6px;
    color: #8a8a8a;
}

.xy .select {
    width: 56px;
    font-family: "DejaVu Sans Mono", monospace;
    font-size: 10px;
}

.xy .dim select {
    padding-left: 4px;
}

.prop-row {
    display: flex;
    align-items: center;
    height: 21px;
    margin-top: 8px;
}

.prop-row label {
    width: 46px;
}

.prop-row .name, .prop-row .select {
    width: 105px;
}

.prop-row .name {
    font-size: 11px;
}

.prop-row .icon-btn {
    margin-left: 13px;
}

.prop-row .icon-btn + .icon-btn {
    margin-left: 19px;
}

.prop-row .toggle {
    margin-left: 6px;
}

.prop-row .toggle button {
    width: 29px;
}

.check {
    display: flex;
    align-items: center;
    gap: 5px;
    margin: 20px 0 2px 5px;
    color: #c4c4c4;
}

.check input {
    width: 12px;
    height: 12px;
    accent-color: #c4c4c4;
}

.quick {
    padding-top: 13px;
    border-bottom: 0;
}

.quick-row {
    display: flex;
    gap: 9px;
    margin-top: 8px;
}

.quick-row .outline {
    flex: none;
    width: 109px;
}

/* overlays */
.callout {
    position: absolute;
    left: 530px;
    top: 10px;
    pointer-events: none;
}

.watermark {
    position: absolute;
    right: 2px;
    bottom: 0;
    display: flex;
    align-items: center;
    gap: 2px;
}

.watermark-text {
    display: flex;
    flex-direction: column;
    align-items: flex-end;
    text-shadow: 1px 0 #ddd, -1px 0 #ddd, 0 1px #ddd, 0 -1px #ddd;
}

.watermark strong {
    color: #c87818;
    font-family: "Noto Sans CJK TC", sans-serif;
    font-size: 21px;
    font-weight: 500;
    line-height: 22px;
}

.watermark span {
    color: #555;
    font-family: "Open Sans", sans-serif;
    font-size: 11px;
    font-weight: 600;
    line-height: 14px;
}
```
